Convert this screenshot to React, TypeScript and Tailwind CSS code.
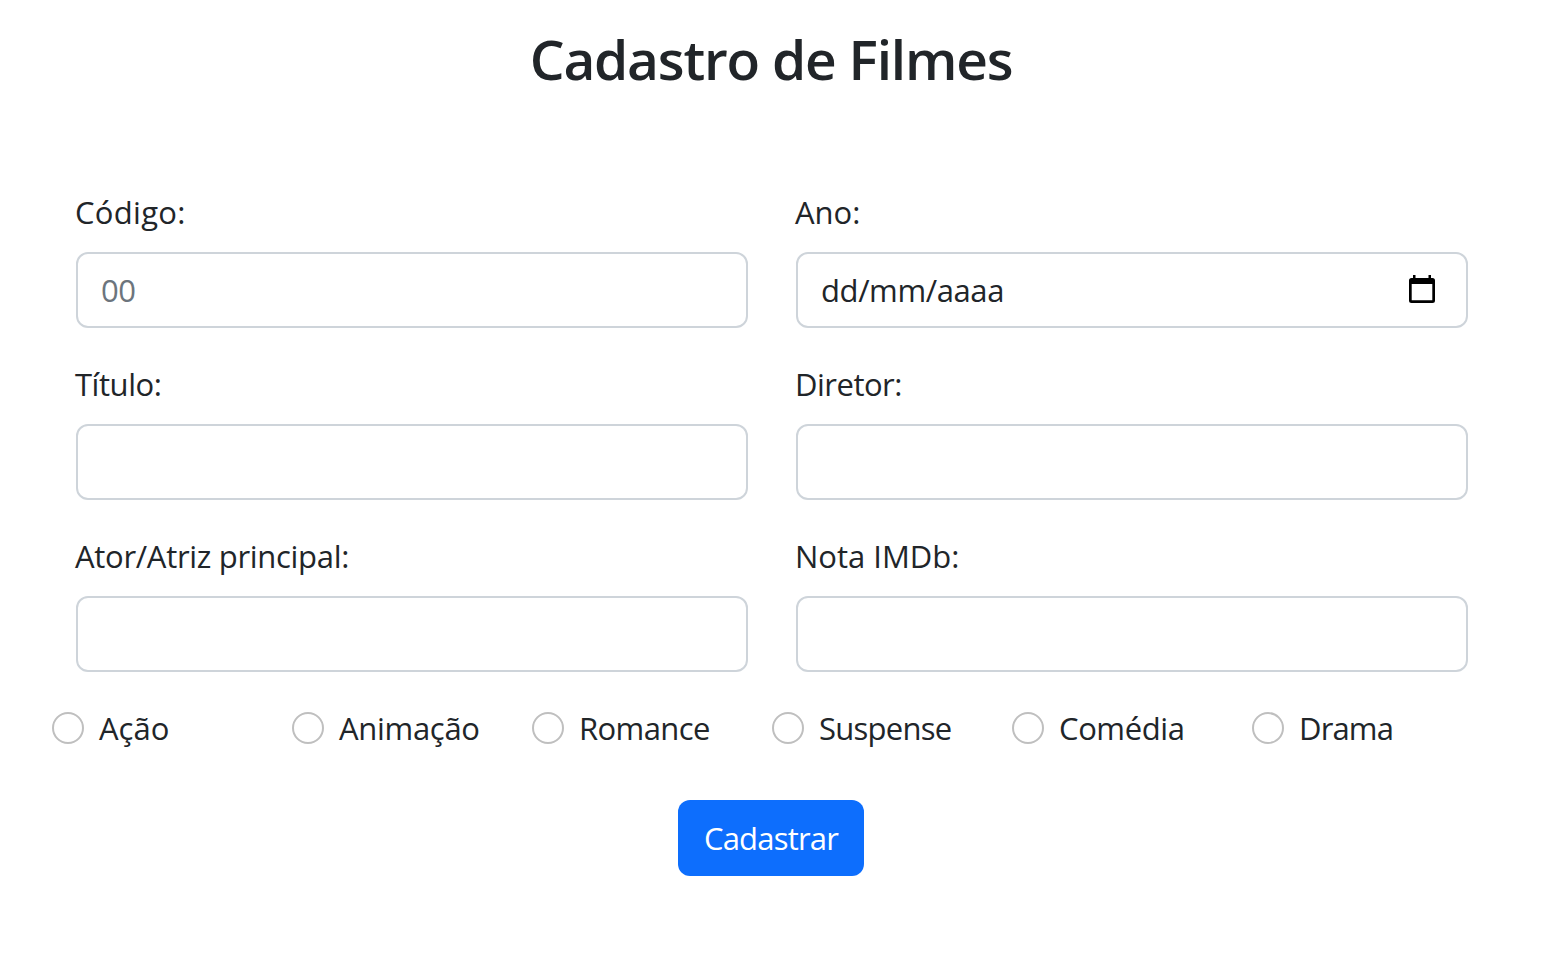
type Field = { label: string; tracking: string; placeholder?: string; date?: boolean };

const fields: Field[] = [
  { label: "Código:", tracking: "tracking-[0.3px]", placeholder: "00" },
  { label: "Ano:", tracking: "tracking-normal", placeholder: "dd/mm/aaaa", date: true },
  { label: "Título:", tracking: "tracking-[-0.45px]" },
  { label: "Diretor:", tracking: "tracking-[-0.5px]" },
  { label: "Ator/Atriz principal:", tracking: "tracking-[-0.3px]" },
  { label: "Nota IMDb:", tracking: "tracking-normal" },
];

const genres = [
  { name: "Ação", tracking: "tracking-normal" },
  { name: "Animação", tracking: "tracking-[-0.3px]" },
  { name: "Romance", tracking: "tracking-[-0.6px]" },
  { name: "Suspense", tracking: "tracking-[-0.75px]" },
  { name: "Comédia", tracking: "tracking-[-0.4px]" },
  { name: "Drama", tracking: "tracking-[-0.85px]" },
];

function CalendarIcon() {
  return (
    <svg className="mr-[31px] mb-0.5 h-7 w-[26px] shrink-0" viewBox="0 0 26 28" aria-hidden="true">
      <path
        fillRule="evenodd"
        d="M4 0h2.500v3h13V0H22v3h1.500A2.500 2.500 0 0 1 26 5.500v20a2.500 2.500 0 0 1-2.500 2.500h-21A2.500 2.500 0 0 1 0 25.500v-20A2.500 2.500 0 0 1 2.500 3H4zM2.700 9v16.300h20.600V9z"
      />
    </svg>
  );
}

export default function App() {
  return (
    <main className="h-[962px] w-[1542px] bg-white font-['Open_Sans',sans-serif] text-[31px] text-[#212529]">
      <h1 className="flex h-[118px] items-center justify-center text-[55px] font-semibold tracking-[-1.2px]">
        <span>Cadastro de Filmes</span>
      </h1>
      <form>
        <div className="grid grid-cols-[672px_672px] gap-x-12 px-[76px] pt-[70px]">
          {fields.map((f, i) => (
            <div key={f.label} className="h-[172px]">
              <label htmlFor={`field-${i}`} className="-ml-px flex h-16 items-start leading-[48px]">
                <span className={f.tracking}>{f.label}</span>
              </label>
              <div className="flex h-[76px] items-center rounded-[12px] border-2 border-[#ced4da]">
                <input
                  id={`field-${i}`}
                  type="text"
                  placeholder={f.placeholder}
                  className={
                    f.date
                      ? "h-full min-w-0 flex-1 bg-transparent px-[23px] tracking-[-0.4px] outline-none placeholder:text-[#212529]"
                      : "h-full min-w-0 flex-1 bg-transparent px-[23px] tracking-[-0.5px] outline-none placeholder:text-[#6c757d]"
                  }
                />
                {f.date && <CalendarIcon />}
              </div>
            </div>
          ))}
        </div>
        <div className="grid h-12 grid-cols-[repeat(6,240px)] pl-[52px]">
          {genres.map((g) => (
            <label key={g.name} className="flex items-center gap-[15px]">
              <input type="radio" name="genero" className="size-8 appearance-none rounded-full border-2 border-[#bfbfbf] checked:border-[10px] checked:border-[#0d6efd]" />
              <span className={g.tracking}>{g.name}</span>
            </label>
          ))}
        </div>
        <button type="button" className="mx-auto mt-12 flex h-[76px] w-[186px] items-center justify-center rounded-[12px] bg-[#0d6efd] text-white">
          <span className="tracking-[-0.8px]">Cadastrar</span>
        </button>
      </form>
    </main>
  );
}
